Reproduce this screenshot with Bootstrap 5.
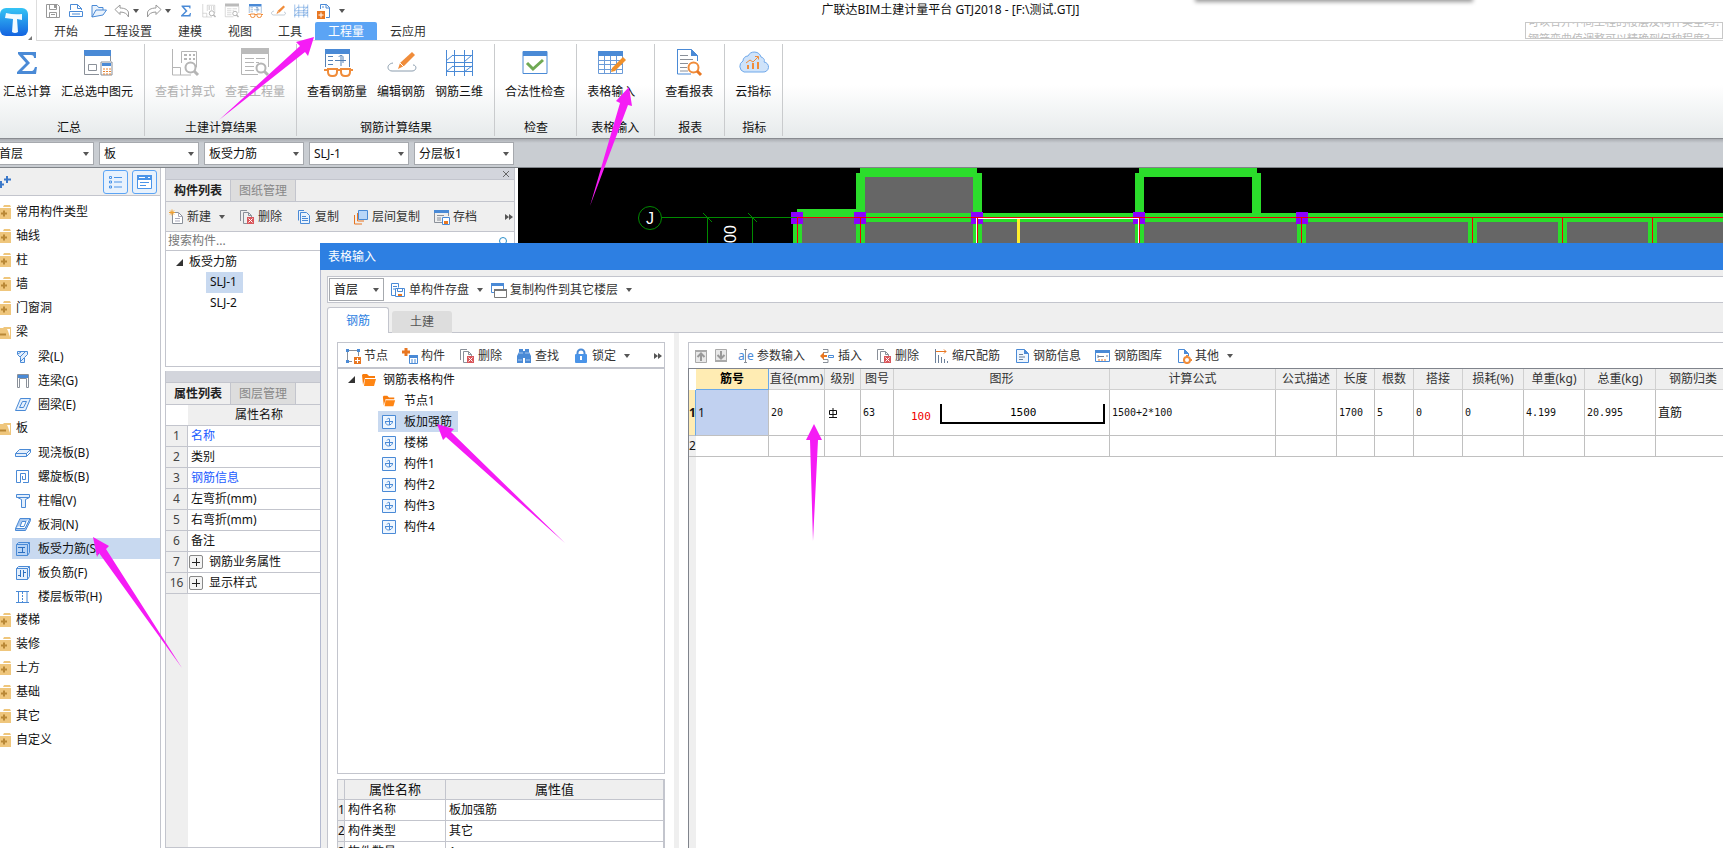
<!DOCTYPE html>
<html lang="zh-CN">
<head>
<meta charset="utf-8">
<meta name="viewport" content="width=device-width, initial-scale=1">
<title>广联达BIM土建计量平台 GTJ2018</title>
<link href="https://cdn.jsdelivr.net/npm/bootstrap@5.3.0/dist/css/bootstrap.min.css" rel="stylesheet">
<style>
:root{--edge:#c3c5cd;--face:#efefef;--blue:#4a8ad6;--sel:#c8d9f0}
body{font-family:"Noto Sans","Noto Sans CJK SC",sans-serif;font-size:12px;line-height:20px;color:#111;background:#fff}
button{background:none;border:0;padding:0;color:inherit;white-space:nowrap}
svg{display:block;flex:none}
a{color:inherit;text-decoration:none}
.ic{width:16px;height:16px}
.flip-x{transform:scaleX(-1)}
.flip-y{transform:scaleY(-1)}
.caret{width:0;height:0;border:3px solid transparent;border-top:4px solid #555;border-bottom:0;flex:none}
.tool{display:flex;align-items:center;gap:3px;color:#333}
.tool .caret{margin-left:5px}
/* title, quick access and tabs */
.topbar{height:41px;border-bottom:1px solid #d9d9d9}
.logo-box{width:37px;height:41px;background:#fff;border-right:1px solid #ddd;padding:8px 0 0}
.quick{height:22px;padding-left:8px;gap:7px}
.caption-text{padding-right:167px;height:20px}
.tabs-main button{height:18px;line-height:17px;padding:0 13px;color:#333}
.tabs-main button.on{background:#5ba4f5;color:#fff;border-radius:2px 2px 0 0}
.tips{width:198px;height:17px;border:1px solid #c8c8c8;font-size:11px;line-height:17px;color:#bbb;overflow:hidden;white-space:nowrap;padding-left:2px}
.tips p{margin:0}
.tips p:first-child{margin-top:-10px}
.peek{top:-6px;left:1196px;width:276px;height:6px;box-shadow:0 1px 4px 1px #999}
/* ribbon */
.ribbon{height:98px;background:linear-gradient(#fff 45%,#e6eaeb);border-bottom:1px solid #888b90}
.rgroup{margin:3px 0 2px;padding:0 11px 0 10px;border-right:1px solid #c9cbcd}
.rgroup.first{padding-left:3px}
.rgroup.wide{padding-right:19px}
.bigs{display:flex;gap:10px}
.big{display:flex;flex-direction:column;align-items:center;height:58px}
.big svg{width:32px;height:32px;margin:3px 0}
.big:disabled{color:#b0b0b0}
.rcap{height:20px;margin:16px -2px 0 0;text-align:center}
.wide .rcap{margin-right:-8px}
/* filter bar */
.filters{height:29px;background:linear-gradient(#a9acb1,#c9cdd2 4px);border-bottom:1px solid #808489;padding-top:3px;gap:5px;margin-left:-6px}
select{appearance:none;border:1px solid #a6a9ae;background:#fff url("data:image/svg+xml,%3Csvg xmlns='http://www.w3.org/2000/svg' width='6' height='4'%3E%3Cpath d='M0 0h6L3 4z' fill='%23555'/%3E%3C/svg%3E") no-repeat right 4px center;height:23px;padding:0 0 0 4px;color:#111;border-radius:0;line-height:20px}
.filters select{width:100px}
/* component type tree */
.types{width:161px;border-right:1px solid var(--edge)}
.types-head{height:28px;background:var(--face);border-bottom:1px solid var(--edge);gap:4px;padding-right:3px}
.sqbtn{width:25px;height:24px;border:1px solid #5ba4f5;border-radius:3px;background:#e8f2fd;display:flex;align-items:center;justify-content:center}
.types ul{padding:4px 0 0}
.types li a{display:flex;align-items:center;height:24px;gap:5px}
.types li a svg{margin-left:-5px}
.types li.sub{padding:2px 0 1px 12px}
.types li.sub a{height:21px;gap:7px}
.types li.sub a svg{margin-left:3px}
.types li.sub a.on,.pick{background:var(--sel)}
/* docked panels */
.dock{width:350px;margin:0 3px 0 4px;background:#fff}
.boxed{border:1px solid var(--edge);border-top:0}
.strip{height:12px;background:#d3d5dc;border-bottom:1px solid var(--edge)}
.duo{height:22px;background:var(--face);border-bottom:1px solid var(--edge)}
.duo button{width:65px;border-right:1px solid var(--edge);color:#888;background:#ddd}
.duo button.on{background:var(--face);color:#222;font-weight:600}
.dtool{height:30px;background:var(--face);border-bottom:1px solid var(--edge);gap:14px;padding:0 1px 0 2px}
.find{height:19px;border:0;border-bottom:1px solid var(--edge);width:100%;padding:0 2px;outline:0}
.find::placeholder{color:#777}
.upper{height:199px;margin-bottom:4px}
.root-row{padding:1px 0 0 10px;gap:6px}
.slj{height:21px;margin-left:40px;width:37px;padding-left:4px;display:block}
table{table-layout:fixed;border-collapse:separate;border-spacing:0}
th{font-weight:400;text-align:center}
td,th{padding:0;white-space:nowrap;overflow:hidden}
.props{width:164px}
.props col:first-child{width:22px}
.props th,.props td{height:21px;border-bottom:1px solid var(--edge)}
.props thead th{height:21px;background:var(--face)}
.props tbody th{background:var(--face);border-right:1px solid var(--edge);color:#444}
.props td{padding-left:3px}
.props td.key{color:#1a5cff}
.lower{background:linear-gradient(to right,var(--face) 22px,#fff 22px)}
.fold-cell{display:flex;align-items:center;gap:6px;margin-left:-2px}
.plus{width:14px;height:14px;border:1px solid #888;border-radius:2px;background:linear-gradient(#222,#222) center/8px 1px no-repeat,linear-gradient(#222,#222) center/1px 8px no-repeat,#f4f4f4}
/* table input window */
.win{left:320px;top:75px;right:0;bottom:0;background:var(--face);border-left:1px solid #b4bad0}
.win-title{height:27px;background:#2d7fe2;color:#fff;padding:4px 8px;margin-left:-1px}
.win-tool{height:27px;margin:6px 0 4px 6px;border:1px solid var(--edge);border-right:0;background:#fff;padding-left:1px}
.win-tool select{width:55px;margin-right:6px}
.win-tabs{height:26px;padding-left:6px;position:relative;z-index:1;margin-bottom:-1px}
.win-tabs button{width:60px;height:22px;background:#ddd;color:#555;border-radius:3px 3px 0 0;margin-left:3px}
.win-tabs button.on{width:62px;height:26px;margin:0;background:#fff;border:1px solid var(--edge);border-bottom:0;color:#2d7fe2}
.pane{margin-left:6px;background:#fff;border:1px solid var(--edge);border-width:1px 0 0 1px;padding:9px 0 0 9px}
.side{width:328px}
.bar{height:27px;border:1px solid var(--edge);gap:14px;padding:0 2px 0 7px}
.movers{gap:4px;margin-right:-5px}
.tree{border:1px solid var(--edge);border-top-width:2px;margin-top:-2px}
.tree a{display:flex;align-items:center;height:21px;gap:6px}
.tree .root{padding-left:10px}
.tree .leaf{margin-left:40px;padding:0 6px 0 4px;width:max-content}
.tree .leaf svg{width:14px;height:14px;margin-right:2px}
.tri{width:0;height:0;border-left:7px solid transparent;border-bottom:7px solid #333;display:inline-block}
.low{height:69px;margin-top:5px;overflow:hidden;border:1px solid var(--edge);border-bottom:0}
.low col:nth-child(1){width:7px}
.low col:nth-child(2){width:101px}
.low th,.low td{border:1px solid var(--edge);border-width:0 1px 1px 0;height:21px}
.low thead th{height:20px;background:var(--face);font-size:13px;line-height:19px}
.low tbody th{background:var(--face)}
.low td{padding-left:3px}
.split{width:5px;background:var(--face);margin:-9px 9px 0 9px}
.sheet{border-left:1px solid #80848c;border-top:1px solid #80848c;background:linear-gradient(to right,var(--face) 7px,#fff 7px);overflow:hidden;margin-top:-1px}
.bars{width:1042px}
.bars col:nth-child(1){width:7px}
.bars col:nth-child(2){width:73px}
.bars col:nth-child(3){width:56px}
.bars col:nth-child(4){width:36px}
.bars col:nth-child(5){width:33px}
.bars col:nth-child(6){width:216px}
.bars col:nth-child(7){width:166px}
.bars col:nth-child(8){width:61px}
.bars col:nth-child(9){width:38px}
.bars col:nth-child(10){width:39px}
.bars col:nth-child(11){width:49px}
.bars col:nth-child(12),.bars col:nth-child(13){width:61px}
.bars col:nth-child(14){width:71px}
.bars th,.bars td{border:1px solid #c0c0c0;border-width:0 1px 1px 0}
.bars thead th{height:21px;background:var(--face);color:#333;border-color:#d0d0d0}
.bars thead th:first-child{background:#fff;border:0}
.bars thead th.on{background:#ffecb3;font-weight:700;color:#000;border-color:#6aa9e8}
.bars tbody th{background:var(--face);border-right:0}
.bars tr.r1{height:46px}
.bars tr.r2{height:21px}
.bars tr.r1 th{background:#ffecb3;border-right:1px solid #6aa9e8;font-weight:700}
.bars td{padding-left:2px;font-family:"DejaVu Sans Mono","Noto Sans CJK SC",monospace;font-size:10px;line-height:16px}
.bars td.cur{background:#c1d1f0;font-family:inherit;font-size:12px}
.bars td.han{font-size:12px}
.shape{font:11px "DejaVu Sans Mono",monospace}
.cad-text{font-family:"Liberation Sans",sans-serif}
.marks{inset:0;pointer-events:none;z-index:5}
</style>
</head>
<body class="vh-100 overflow-hidden d-flex flex-column position-relative">

<svg width="0" height="0" class="position-absolute" aria-hidden="true">
  <symbol id="save" viewBox="0 0 16 16"><path d="M1.500 1.500h11l2 2v11h-13z M4.500 1.500v5h7v-5 M4.500 14.500v-5h7v5" fill="none" stroke="#999"/><path d="M9 2h2v3H9zM6 11h4v1H6z" fill="#999"/></symbol>
  <symbol id="new" viewBox="0 0 16 16"><path d="M2.500 7V1.500h7l4 4V7M1.500 8.500h13v5h-13z M9.500 1.500v4h4M4 11h8" fill="none" stroke="#4a8ad6"/></symbol>
  <symbol id="open" viewBox="0 0 16 16"><path d="M1 14V2.500h5l1.500 2H12V7M1 14l4-7h10.500L12 12z" fill="#eaf3fd" stroke="#4a8ad6"/></symbol>
  <symbol id="undo" viewBox="0 0 16 16"><path d="M1 6.500L6 2v3c5 0 8.500 2 8.500 5v4c-1-3-4-5-8.500-5v2.500z" fill="#fff" stroke="#999"/></symbol>
  <symbol id="sigma" viewBox="0 0 32 32"><path d="M7 5h18v6h-2c0-2-1-3-3-3h-8l7 8-8 8h9c3 0 3-2 4-4h2l-1 7H6v-2l9-9-8-9z" fill="#4a8ad6"/></symbol>
  <symbol id="pick" viewBox="0 0 32 32"><path d="M3 3h27v6H3z" fill="#4a8ad6"/><path d="M3.500 8v19.500H18M29.500 9v5M7.500 17.500h8v6h-8z" fill="none" stroke="#8a9099"/><path d="M20 15h11v13H20z" fill="#fff" stroke="#8a9099"/><path d="M21 16h9v3h-9z" fill="#4a8ad6"/><path d="M22 22h2m1 0h2m1 0h2M22 24.500h2m1 0h2m1 0h2M22 27h2m1 0h2m1 0h2" stroke="#e88330"/></symbol>
  <symbol id="calc" viewBox="0 0 32 32"><g fill="none" stroke="#b5b5b5"><path d="M3.500 2v26H22M3.500 20.500h8V28M12.500 16V4.500h15V20H26"/><circle cx="21.500" cy="20.500" r="5" stroke-width="2"/><path d="M25 24l4 4" stroke-width="3"/><path d="M15 8h3m2 0h2m2 0h2M15 12h3m2 0h2m2 0h2" stroke-width="2"/></g></symbol>
  <symbol id="quant" viewBox="0 0 32 32"><path d="M2 1h28v6H2z" fill="#bbb"/><g fill="none" stroke="#b5b5b5"><path d="M2.500 7v20.500H19M29.500 7v13M6 11.500h9m2 0h9M6 15.500h9m2 0h3M6 19.500h9M6 23.500h9"/><circle cx="22" cy="21" r="4.500" stroke-width="2"/><path d="M25 24l4 4" stroke-width="3"/></g></symbol>
  <symbol id="glass" viewBox="0 0 32 32"><path d="M4 2h25v5H4z" fill="#4a8ad6"/><path d="M4.500 7v13M28.500 7v13M7 9.500h5M7 13.500h5M7 17.500h5M14 13.500h11M20 8v11M18 10c0-2 4-2 4 0v6" fill="none" stroke="#5581b5"/><g fill="#fff" stroke="#f08c3a" stroke-width="2"><path d="M7 22h9v3q0 4-4 4h-1q-4 0-4-4zM20 22h9v3q0 4-4 4h-1q-4 0-4-4z"/><path d="M15 23h5M3 23h4M29 23h3" fill="none"/></g></symbol>
  <symbol id="edit" viewBox="0 0 32 32"><path d="M27 5l3 3-11 11-6 3 2-6z" fill="#f08c3a"/><path d="M15 16l4 4" stroke="#fff"/><path d="M8 16c-7 1-6 8-1 8h20c5 0 5-6 1-6" fill="none" stroke="#8a9cad"/></symbol>
  <symbol id="grid3" viewBox="0 0 32 32"><path d="M3.500 3v26M11.500 3v26M21.500 3v26M29.500 3v26M9 8.500h21M3 15.500h27M9 19.500h21M3 24.500h27M3 14l7-6M21 15l8-7M3 25l7-6M21 25l8-6" fill="none" stroke="#4a8ad6"/></symbol>
  <symbol id="docplus" viewBox="0 0 16 16"><path d="M4.500 6V1.500h6l3 3v10H10" fill="none" stroke="#4a8ad6"/><path d="M10 1v4h4M6 4h2" stroke="#4a8ad6" fill="none"/><path d="M1 8h8v8H1z" fill="#e87722"/><path d="M5 9.500v5M2.500 12h5" stroke="#fff"/></symbol>
  <symbol id="check" viewBox="0 0 32 32"><path d="M4 4.500h24v22H4z" fill="#fff" stroke="#4a8ad6"/><path d="M4 4h24v5H4z" fill="#4a8ad6"/><path d="M8 16l6 6 10-9" fill="none" stroke="#6fa954" stroke-width="3"/></symbol>
  <symbol id="tabin" viewBox="0 0 32 32"><path d="M3 4h25v5H3z" fill="#4a8ad6"/><path d="M3.500 9v17.500h24V9M3 13.500h24M3 17.500h24M3 22.500h24M9.500 9v17M15.500 9v17M21.500 9v17" fill="none" stroke="#6b9bd8"/><path d="M28 10l3 3-11 11-4 1 1-4z" fill="#f0902a"/></symbol>
  <symbol id="report" viewBox="0 0 32 32"><path d="M4.500 2.500h14l6 6V14M4.500 2v25H18" fill="none" stroke="#4a8ad6"/><path d="M18 2v7h7z" fill="#4a8ad6"/><path d="M7 8.500h8M7 12.500h13M7 16.500h8M7 20.500h7M7 24h8" stroke="#8a9099"/><circle cx="20.500" cy="20.500" r="5" fill="none" stroke="#f08c3a" stroke-width="2"/><path d="M24 24l4 4" stroke="#e87722" stroke-width="3"/></symbol>
  <symbol id="cloud" viewBox="0 0 32 32"><path d="M7 25a6 6 0 0 1-1-11 5 5 0 0 1 5-5 7 7 0 0 1 13 1c3 1 4 3 3 5a5 5 0 0 1-1 10z" fill="#cfe3fa" stroke="#6fa8ea"/><path d="M11 22v-4M16 22v-6M21 22v-7" stroke="#f08c3a" stroke-width="2"/><path d="M9 16l4-3 3 2 5-5M18 9.500h3.500v3" fill="none" stroke="#f08c3a"/></symbol>
  <symbol id="fold" viewBox="0 0 16 16"><path d="M9 1h6l1 2H8zM1 4h15v11H1z" fill="#efc67c"/><path d="M9 6.500v6M6 9.500h6" stroke="#b98836" stroke-width="2"/></symbol>
  <symbol id="foldo" viewBox="0 0 16 16"><path d="M1 4h7l1-1h7v12H1z" fill="#efc67c"/><path d="M12 5h3v8l-2-6z" fill="#fff"/><path d="M5 10.500h6" stroke="#b98836" stroke-width="2"/></symbol>
  <symbol id="beam" viewBox="0 0 16 16"><path d="M2.500 2.500h10v3l-3 3v5h-4v-5l-3-3z" fill="#e4effc" stroke="#4a8ad6"/><path d="M3 5l3-2M5 8l5-5M6 12l3-3" stroke="#4a8ad6"/></symbol>
  <symbol id="lintel" viewBox="0 0 16 16"><path d="M2.500 1.500h11v13h-2v-9h-7v9h-2z" fill="#fff" stroke="#8a9099"/><path d="M3 2h10v3H3z" fill="#4a8ad6"/></symbol>
  <symbol id="ring" viewBox="0 0 16 16"><path d="M5.500 1.500h10l-5 12H.5zM7.500 4.500h4l-3 6h-4z" fill="#e4effc" stroke="#4a8ad6"/></symbol>
  <symbol id="slab" viewBox="0 0 16 16"><path d="M.5 8.500l4-4h11l-4 4zM.5 8.500v3h11v-3M11.500 11.500l4-4v-3" fill="#e4effc" stroke="#4a8ad6"/></symbol>
  <symbol id="spiral" viewBox="0 0 16 16"><path d="M8 13.500h5.500v-12h-12v12H5.500v-9h5v6h-3V7" fill="none" stroke="#4a8ad6"/></symbol>
  <symbol id="cap" viewBox="0 0 16 16"><path d="M1.500 1.500h13v3l-4 2v8h-4v-8l-4-2h-1z" fill="#e4effc" stroke="#4a8ad6"/><path d="M2 4.500h12" stroke="#4a8ad6"/></symbol>
  <symbol id="hole" viewBox="0 0 16 16"><path d="M5 1.500h10l-5 10H.5zM.5 11.500v2h10l5-10v-2" fill="#a9c8ef" stroke="#4a8ad6"/><path d="M7 4.500h4l-2 5H5z" fill="#fff" stroke="#4a8ad6"/></symbol>
  <symbol id="rebar" viewBox="0 0 16 16"><path d="M1.500 3.500l2-2h11v10l-2 3h-11zM1.500 3.500h11v11M12.500 3.500l2-2" fill="#b7d3f5" stroke="#4a8ad6"/><path d="M3 6.500h7M3 11.500h7M7.500 6v6" stroke="#2c6fc0"/></symbol>
  <symbol id="rebarf" viewBox="0 0 16 16"><path d="M1.500 3.500l2-2h11v10l-2 3h-11zM1.500 3.500h11v11M12.500 3.500l2-2" fill="#e4effc" stroke="#4a8ad6"/><path d="M5.500 5v7M8.500 5v7M3 10.500h3M8 7.500h3" stroke="#2c6fc0"/></symbol>
  <symbol id="strip" viewBox="0 0 16 16"><path d="M1 2.500h13M1 13.500h13" stroke="#4a8ad6"/><path d="M3.500 3v10M12 3v10" stroke="#4a8ad6"/><path d="M7.500 3v10" stroke="#4a8ad6" stroke-dasharray="2 1"/></symbol>
  <symbol id="nu" viewBox="0 0 16 16"><path d="M4.500 3.500h6l4 4v7h-10z" fill="#fff" stroke="#8a9099"/><path d="M10.500 3.500v4h4M7 9.500h5M7 12h5" fill="none" stroke="#aab"/><path d="M4 .500v6M1 3.500h6M2 1.500l4 4M6 1.500l-4 4" stroke="#f0a030"/></symbol>
  <symbol id="del" viewBox="0 0 16 16"><path d="M1.500 12V1.500H8M4.500 14.500v-11h5l3 3V9M4.500 14.500H8M9.500 3.500v3h3" fill="none" stroke="#8a9099"/><path d="M8 8h7v7H8z" fill="#d9575c"/><path d="M9.500 9.500l4 4m0-4l-4 4" stroke="#fff"/></symbol>
  <symbol id="copy" viewBox="0 0 16 16"><path d="M2.500 11.500V1.500H8M4.500 3.500h6l3 3v8h-9z" fill="#eaf3fd" stroke="#4a8ad6"/><path d="M6 7.500h4M6 9.500h6M6 11.500h6" stroke="#4a8ad6"/></symbol>
  <symbol id="floors" viewBox="0 0 16 16"><path d="M1.500 6v9H9M4.500 4v8H11" fill="none" stroke="#e87722"/><path d="M5.500 1.500h9v9h-9z" fill="#b9d6f8" stroke="#4a8ad6"/></symbol>
  <symbol id="archive" viewBox="0 0 16 16"><path d="M0 1h15v3H0z" fill="#4a8ad6"/><path d="M.5 4v9.500H8M14.500 4v3M3 6.500h7M3 9h4M3 11h4" fill="none" stroke="#8a9099"/><path d="M8.500 8.500h7v7h-7z" fill="#fff" stroke="#4a8ad6"/><path d="M10 12h4v3h-4z" fill="#e87722"/></symbol>
  <symbol id="disk" viewBox="0 0 16 16"><path d="M6 13.500H1.500V1.500h7v4M3 4.500h4M3 7h2" fill="none" stroke="#4a8ad6"/><path d="M5.500 6.500h9v8h-9z" fill="#fff" stroke="#4a8ad6"/><path d="M7.500 6.500v3h5v-3" fill="none" stroke="#4a8ad6"/><path d="M8 12h4v2H8z" fill="#e87722"/></symbol>
  <symbol id="wins" viewBox="0 0 16 16"><path d="M.5 1.500h12v9H.5z" fill="#fff" stroke="#4a8ad6"/><path d="M0 1h13v3H0z" fill="#4a8ad6"/><path d="M3.500 7.500h12v8h-12z" fill="#fff" stroke="#777"/><path d="M3 7h13v2H3z" fill="#777"/></symbol>
  <symbol id="node" viewBox="0 0 16 16"><path d="M2.500 2.500h11V8M2.500 2.500v11H7" fill="none" stroke="#8a9099"/><path d="M1 1h3v3H1zM12 1h3v3h-3zM1 12h3v3H1z" fill="#4a8ad6"/><path d="M9 9h7v7H9z" fill="#e87722"/><path d="M12.500 10v5M10 12.500h5" stroke="#fff"/></symbol>
  <symbol id="comp" viewBox="0 0 16 16"><path d="M4 0v8M0 4h8" stroke="#e87722" stroke-width="3"/><path d="M7.500 7.500h8v8h-8z" fill="#fff" stroke="#4a8ad6"/><path d="M7 7h9v3H7z" fill="#4a8ad6"/><path d="M9 12h2m1 0h2M9 14h2m1 0h2" stroke="#4a8ad6"/></symbol>
  <symbol id="bino" viewBox="0 0 16 16"><path d="M3 1h4v2h2V1h4v3l2 4v7H9v-5H7v5H1V8l2-4z" fill="#4a8ad6"/><path d="M2 12h4M10 12h4M3 5h4M9 5h4" stroke="#a9c8ef"/></symbol>
  <symbol id="lock" viewBox="0 0 16 16"><path d="M4.500 7V5a3.500 3.500 0 0 1 7 0v2" fill="none" stroke="#4a8ad6" stroke-width="2"/><rect x="2" y="6" width="12" height="9" rx="1" fill="#4a94e8"/><path d="M8 8v4" stroke="#fff" stroke-width="2"/></symbol>
  <symbol id="more" viewBox="0 0 8 8"><path d="M0 1l4 3-4 3zM4 1l4 3-4 3z" fill="#555"/></symbol>
  <symbol id="ofold" viewBox="0 0 16 16"><path d="M1 3l1-1h4l2 2h6v2H4l-2 7z" fill="#f97c0c"/><path d="M4 7h11l-2 7H3z" fill="#ff8614"/></symbol>
  <symbol id="leaf" viewBox="0 0 14 14"><path d="M.5.5h13v13H.5z" fill="#eef6ff" stroke="#4a8ad6"/><path d="M7.500 3.500V10M3 6.500h8M5 4.500c1-2 3-1 2.500 0M3.500 7c0 4 6 4 7 0" fill="none" stroke="#4a8ad6"/></symbol>
  <symbol id="up" viewBox="0 0 16 16"><path d="M2.500 2.500h11v12h-11z" fill="#e8e8e8" stroke="#aaa"/><path d="M8 13V6M4.500 9L8 5.500 11.500 9" fill="none" stroke="#999" stroke-width="2"/><path d="M2 2h12v2H2z" fill="#aaa"/></symbol>
  <symbol id="ins" viewBox="0 0 16 16"><path d="M4 1.500h5v3H4M4 14.500h5v-3H4" fill="none" stroke="#8a9099"/><path d="M1 8l4-4v3h3v2H5v3z" fill="#e87722"/><path d="M9.500 7.500h5v2h-5z" fill="#fff" stroke="#4a8ad6"/></symbol>
  <symbol id="ruler" viewBox="0 0 16 16"><path d="M2 3.500h11M11 1.500l2 2-2 2" fill="none" stroke="#e87722"/><path d="M2.500 1v14M5.500 7v8M8.500 9v6M11.500 11v4M14.500 13v2" stroke="#6b7f99"/></symbol>
  <symbol id="info" viewBox="0 0 16 16"><path d="M2.500 1.500h8l4 4v9h-12z" fill="#eef6ff" stroke="#4a8ad6"/><path d="M10 1v5h5z" fill="#4a8ad6"/><path d="M5 6.500h4M5 9h6M5 11.500h4" stroke="#6b7f99"/></symbol>
  <symbol id="lib" viewBox="0 0 16 16"><path d="M.5 2.500h14v11H.5z" fill="#fff" stroke="#4a8ad6"/><path d="M0 2h15v3H0z" fill="#4a8ad6"/><path d="M3 7v3M3 8.500h6M11 8h2" stroke="#6b7f99"/><path d="M3 12h2m1 0h2m1 0h2" stroke="#e87722"/></symbol>
  <symbol id="oth" viewBox="0 0 16 16"><path d="M8 14.500H2.500v-13h6l4 4V8" fill="#fff" stroke="#4a8ad6"/><path d="M8 1v5h5z" fill="#4a8ad6"/><circle cx="11" cy="12" r="3" fill="none" stroke="#f08c3a" stroke-width="2"/><path d="M11 7v2M11 15v1M7 12h1M14 12h2" stroke="#f08c3a" stroke-width="2"/></symbol>
</svg>

<header class="topbar d-flex flex-shrink-0">
  <div class="logo-box flex-shrink-0">
    <svg width="33" height="32" viewBox="0 0 33 32" role="img" aria-label="GTJ"><defs><linearGradient id="lg" x2="0" y2="1"><stop stop-color="#35c4f5"/><stop offset="1" stop-color="#1463e0"/></linearGradient></defs><rect width="28" height="28" rx="6" fill="url(#lg)"/><path d="M6 5q8 2 16 1v6l-5-1 1 13q-3 2-6 0l1-13-8-1z" fill="#f2faff"/><path d="M32 28v4h-4z" fill="#777"/></svg>
  </div>
  <div class="flex-grow-1">
    <div class="d-flex">
      <div class="quick d-flex align-items-center">
        <button aria-label="保存"><svg class="ic"><use href="#save"/></svg></button>
        <button aria-label="新建"><svg class="ic"><use href="#new"/></svg></button>
        <button aria-label="打开"><svg class="ic"><use href="#open"/></svg></button>
        <button class="tool" aria-label="撤销"><svg class="ic"><use href="#undo"/></svg><i class="caret m-0"></i></button>
        <button class="tool" aria-label="恢复"><svg class="ic flip-x"><use href="#undo"/></svg><i class="caret m-0"></i></button>
        <button aria-label="汇总"><svg class="ic"><use href="#sigma"/></svg></button>
        <button aria-label="计算式"><svg class="ic"><use href="#calc"/></svg></button>
        <button aria-label="工程量"><svg class="ic"><use href="#quant"/></svg></button>
        <button aria-label="钢筋量"><svg class="ic"><use href="#glass"/></svg></button>
        <button aria-label="编辑钢筋"><svg class="ic"><use href="#edit"/></svg></button>
        <button aria-label="钢筋三维"><svg class="ic"><use href="#grid3"/></svg></button>
        <button aria-label="添加"><svg class="ic"><use href="#docplus"/></svg></button>
        <button aria-label="自定义快速访问"><i class="caret d-block"></i></button>
      </div>
      <div class="caption-text flex-grow-1 text-center">广联达BIM土建计量平台 GTJ2018 - [F:\测试.GTJ]</div>
    </div>
    <div class="d-flex justify-content-between">
      <nav class="tabs-main d-flex ps-1">
        <button>开始</button><button>工程设置</button><button>建模</button><button>视图</button><button>工具</button><button class="on">工程量</button><button>云应用</button>
      </nav>
      <div class="tips"><p>可以合并不同工程的楼层及构件类型吗？</p><p>钢筋弯曲值调整可以精确到何种程度？</p></div>
    </div>
  </div>
</header>
<div class="peek position-absolute"></div>

<section class="ribbon d-flex flex-shrink-0">
  <div class="rgroup first"><div class="bigs">
    <button class="big"><svg><use href="#sigma"/></svg>汇总计算</button>
    <button class="big"><svg><use href="#pick"/></svg>汇总选中图元</button></div><div class="rcap">汇总</div></div>
  <div class="rgroup"><div class="bigs">
    <button class="big" disabled><svg><use href="#calc"/></svg>查看计算式</button>
    <button class="big" disabled><svg><use href="#quant"/></svg>查看工程量</button></div><div class="rcap">土建计算结果</div></div>
  <div class="rgroup"><div class="bigs">
    <button class="big"><svg><use href="#glass"/></svg>查看钢筋量</button>
    <button class="big"><svg><use href="#edit"/></svg>编辑钢筋</button>
    <button class="big"><svg><use href="#grid3"/></svg>钢筋三维</button></div><div class="rcap">钢筋计算结果</div></div>
  <div class="rgroup"><button class="big"><svg><use href="#check"/></svg>合法性检查</button><div class="rcap">检查</div></div>
  <div class="rgroup wide"><button class="big"><svg><use href="#tabin"/></svg>表格输入</button><div class="rcap">表格输入</div></div>
  <div class="rgroup"><button class="big"><svg><use href="#report"/></svg>查看报表</button><div class="rcap">报表</div></div>
  <div class="rgroup"><button class="big"><svg><use href="#cloud"/></svg>云指标</button><div class="rcap">指标</div></div>
</section>

<div class="filters d-flex flex-shrink-0">
  <select aria-label="楼层"><option>首层</option></select>
  <select aria-label="构件类别"><option>板</option></select>
  <select aria-label="构件类型"><option>板受力筋</option></select>
  <select aria-label="构件"><option>SLJ-1</option></select>
  <select aria-label="分层"><option>分层板1</option></select>
</div>

<main class="d-flex flex-grow-1 position-relative overflow-hidden">
  <aside class="types flex-shrink-0">
    <div class="types-head d-flex align-items-center">
      <svg class="me-auto" width="11" height="14" viewBox="0 0 11 14"><path d="M7 1v7M4 4.500h7M1 6v7M0 9.500h4" stroke="#3b78c9" stroke-width="2"/></svg>
      <button class="sqbtn" aria-label="列表"><svg width="13" height="14" viewBox="0 0 13 14"><path d="M.5 1.500h2v2h-2zM.5 6h2v2h-2zM.5 11h2v2h-2zM5 2.500h8M5 7h8M5 12h8" fill="none" stroke="#4a94e8"/></svg></button>
      <button class="sqbtn" aria-label="面板"><svg width="15" height="14" viewBox="0 0 15 14"><path d="M.5.5h14v13H.5z" fill="#fff" stroke="#4a94e8"/><path d="M0 0h15v5H0z" fill="#4a94e8"/><path d="M2 2.500h6m3 0h2" stroke="#fff"/><path d="M3 7.500h9M3 10.500h6" stroke="#4a94e8"/></svg></button>
    </div>
    <ul class="list-unstyled m-0">
      <li><a href="#"><svg class="ic"><use href="#fold"/></svg>常用构件类型</a></li>
      <li><a href="#"><svg class="ic"><use href="#fold"/></svg>轴线</a></li>
      <li><a href="#"><svg class="ic"><use href="#fold"/></svg>柱</a></li>
      <li><a href="#"><svg class="ic"><use href="#fold"/></svg>墙</a></li>
      <li><a href="#"><svg class="ic"><use href="#fold"/></svg>门窗洞</a></li>
      <li><a href="#"><svg class="ic"><use href="#foldo"/></svg>梁</a></li>
      <li class="sub"><a href="#"><svg class="ic"><use href="#beam"/></svg>梁(L)</a></li>
      <li class="sub"><a href="#"><svg class="ic"><use href="#lintel"/></svg>连梁(G)</a></li>
      <li class="sub"><a href="#"><svg class="ic"><use href="#ring"/></svg>圈梁(E)</a></li>
      <li><a href="#"><svg class="ic"><use href="#foldo"/></svg>板</a></li>
      <li class="sub"><a href="#"><svg class="ic"><use href="#slab"/></svg>现浇板(B)</a></li>
      <li class="sub"><a href="#"><svg class="ic"><use href="#spiral"/></svg>螺旋板(B)</a></li>
      <li class="sub"><a href="#"><svg class="ic"><use href="#cap"/></svg>柱帽(V)</a></li>
      <li class="sub"><a href="#"><svg class="ic"><use href="#hole"/></svg>板洞(N)</a></li>
      <li class="sub"><a href="#" class="on"><svg class="ic"><use href="#rebar"/></svg>板受力筋(S)</a></li>
      <li class="sub"><a href="#"><svg class="ic"><use href="#rebarf"/></svg>板负筋(F)</a></li>
      <li class="sub"><a href="#"><svg class="ic"><use href="#strip"/></svg>楼层板带(H)</a></li>
      <li><a href="#"><svg class="ic"><use href="#fold"/></svg>楼梯</a></li>
      <li><a href="#"><svg class="ic"><use href="#fold"/></svg>装修</a></li>
      <li><a href="#"><svg class="ic"><use href="#fold"/></svg>土方</a></li>
      <li><a href="#"><svg class="ic"><use href="#fold"/></svg>基础</a></li>
      <li><a href="#"><svg class="ic"><use href="#fold"/></svg>其它</a></li>
      <li><a href="#"><svg class="ic"><use href="#fold"/></svg>自定义</a></li>
    </ul>
  </aside>

  <div class="dock d-flex flex-column flex-shrink-0">
    <section class="upper boxed">
      <div class="strip d-flex justify-content-end align-items-center pe-1"><button aria-label="关闭"><svg width="8" height="8" viewBox="0 0 8 8"><path d="M1 1l6 6M7 1L1 7" stroke="#666"/></svg></button></div>
      <div class="duo d-flex"><button class="on">构件列表</button><button>图纸管理</button></div>
      <div class="dtool d-flex align-items-center">
        <button class="tool"><svg class="ic"><use href="#nu"/></svg>新建<i class="caret"></i></button>
        <button class="tool"><svg class="ic"><use href="#del"/></svg>删除</button>
        <button class="tool"><svg class="ic"><use href="#copy"/></svg>复制</button>
        <button class="tool"><svg class="ic"><use href="#floors"/></svg>层间复制</button>
        <button class="tool"><svg class="ic"><use href="#archive"/></svg>存档</button>
        <button class="ms-auto" aria-label="更多"><svg width="8" height="8"><use href="#more"/></svg></button>
      </div>
      <div class="position-relative">
        <input class="find d-block" type="text" placeholder="搜索构件..." aria-label="搜索构件">
        <svg class="position-absolute top-0 end-0 me-1 mt-1" width="12" height="14" viewBox="0 0 12 14"><circle cx="5" cy="5" r="3.500" fill="none" stroke="#2c8fc9"/><path d="M8 8l3 4" stroke="#2c8fc9" stroke-width="2"/></svg>
      </div>
      <div class="root-row d-flex align-items-center"><i class="tri"></i><span>板受力筋</span></div>
      <a href="#" class="slj pick">SLJ-1</a>
      <a href="#" class="slj">SLJ-2</a>
    </section>
    <section class="lower boxed flex-grow-1 overflow-hidden">
      <div class="strip"></div>
      <div class="duo d-flex"><button class="on">属性列表</button><button>图层管理</button></div>
      <table class="props">
        <colgroup><col><col></colgroup>
        <thead><tr><th class="bg-white"></th><th>属性名称</th></tr></thead>
        <tbody>
          <tr><th>1</th><td class="key">名称</td></tr>
          <tr><th>2</th><td>类别</td></tr>
          <tr><th>3</th><td class="key">钢筋信息</td></tr>
          <tr><th>4</th><td>左弯折(mm)</td></tr>
          <tr><th>5</th><td>右弯折(mm)</td></tr>
          <tr><th>6</th><td>备注</td></tr>
          <tr><th>7</th><td><div class="fold-cell"><button class="plus" aria-label="展开"></button>钢筋业务属性</div></td></tr>
          <tr><th>16</th><td><div class="fold-cell"><button class="plus" aria-label="展开"></button>显示样式</div></td></tr>
        </tbody>
      </table>
    </section>
  </div>

  <div class="flex-grow-1 bg-black overflow-hidden">
    <svg width="1205" height="75" viewBox="518 168 1205 75" shape-rendering="crispEdges">
      <path d="M865 177h108v36H865zM797 217h926v26H797z" fill="#666"/>
      <g fill="#2bdd2b"><path d="M797 209h59v8h-59zM860 168h117v9H860zM856 173h9v70h-9zM973 173h9v70h-9zM865 213h858v9H865zM793 224h9v19h-9zM1139 168h118v9h-118zM1135 173h9v70h-9zM1252 173h9v40h-9zM1297 222h9v21h-9zM1468 222h9v21h-9zM1558 222h9v21h-9zM1648 222h9v21h-9z"/></g>
      <g fill="#8c00ff"><path d="M791 212h12v12h-12zM854 212h12v12h-12zM971 212h12v12h-12zM1133 212h12v12h-12zM1296 212h12v12h-12z"/></g>
      <path d="M1017 218h3v25h-3z" fill="#ffef2b"/>
      <path d="M976.500 218v25M978 218.500h160.500v24.500" fill="none" stroke="#fff"/>
      <path d="M797 217.500h926M797.500 218v25M860.500 218v25M977.500 218v25M1139.500 218v25M1301.500 218v25M1472.500 218v25M1562.500 218v25M1652.500 218v25" stroke="#f00000"/>
      <g fill="none" stroke="#008a00"><circle cx="650" cy="218" r="11.500" shape-rendering="auto"/><path d="M662 217.500h135M707.500 217v26M752.500 217v26M703 213l9 9M748 213l9 9"/></g>
      <g class="cad-text" fill="#fff"><text x="646" y="224" font-size="16">J</text><text transform="translate(736 243) rotate(-90)" font-size="16">00</text></g>
    </svg>
  </div>

  <section class="win position-absolute d-flex flex-column" role="dialog" aria-label="表格输入">
    <div class="win-title">表格输入</div>
    <div class="win-tool d-flex align-items-center flex-shrink-0">
      <select aria-label="楼层"><option>首层</option></select>
      <button class="tool"><svg class="ic"><use href="#disk"/></svg>单构件存盘<i class="caret"></i></button>
      <button class="tool ms-2"><svg class="ic"><use href="#wins"/></svg>复制构件到其它楼层<i class="caret"></i></button>
    </div>
    <div class="win-tabs d-flex align-items-end flex-shrink-0"><button class="on">钢筋</button><button>土建</button></div>
    <div class="pane d-flex flex-grow-1 overflow-hidden">
      <div class="side d-flex flex-column flex-shrink-0">
        <div class="bar d-flex align-items-center flex-shrink-0">
          <button class="tool"><svg class="ic"><use href="#node"/></svg>节点</button>
          <button class="tool"><svg class="ic"><use href="#comp"/></svg>构件</button>
          <button class="tool"><svg class="ic"><use href="#del"/></svg>删除</button>
          <button class="tool"><svg class="ic"><use href="#bino"/></svg>查找</button>
          <button class="tool"><svg class="ic"><use href="#lock"/></svg>锁定<i class="caret"></i></button>
          <button class="ms-auto" aria-label="更多"><svg width="8" height="8"><use href="#more"/></svg></button>
        </div>
        <div class="tree flex-grow-1 overflow-hidden">
          <a href="#" class="root"><i class="tri"></i><svg class="ic"><use href="#ofold"/></svg>钢筋表格构件</a>
          <a href="#" class="leaf"><svg><use href="#ofold"/></svg>节点1</a>
          <a href="#" class="leaf pick"><svg><use href="#leaf"/></svg>板加强筋</a>
          <a href="#" class="leaf"><svg><use href="#leaf"/></svg>楼梯</a>
          <a href="#" class="leaf"><svg><use href="#leaf"/></svg>构件1</a>
          <a href="#" class="leaf"><svg><use href="#leaf"/></svg>构件2</a>
          <a href="#" class="leaf"><svg><use href="#leaf"/></svg>构件3</a>
          <a href="#" class="leaf"><svg><use href="#leaf"/></svg>构件4</a>
        </div>
        <div class="low flex-shrink-0">
          <table class="w-100">
            <colgroup><col><col><col></colgroup>
            <thead><tr><th></th><th>属性名称</th><th>属性值</th></tr></thead>
            <tbody>
              <tr><th>1</th><td>构件名称</td><td>板加强筋</td></tr>
              <tr><th>2</th><td>构件类型</td><td>其它</td></tr>
              <tr><th>3</th><td>构件数量</td><td>1</td></tr>
            </tbody>
          </table>
        </div>
      </div>
      <div class="split flex-shrink-0"></div>
      <div class="d-flex flex-column flex-grow-1 overflow-hidden">
        <div class="bar d-flex align-items-center flex-shrink-0 ps-1 border-end-0">
          <div class="movers d-flex">
            <button aria-label="上移"><svg class="ic"><use href="#up"/></svg></button>
            <button aria-label="下移"><svg class="ic flip-y"><use href="#up"/></svg></button>
          </div>
          <button class="tool"><svg class="ic" viewBox="0 0 16 16"><g fill="#4a8ad6" font-size="12"><text x="0" y="12">a</text><text x="9" y="12">e</text></g><path d="M6 1.500h3M7.500 2v12M6 14.500h3" stroke="#8a9099"/></svg>参数输入</button>
          <button class="tool"><svg class="ic"><use href="#ins"/></svg>插入</button>
          <button class="tool"><svg class="ic"><use href="#del"/></svg>删除</button>
          <button class="tool"><svg class="ic"><use href="#ruler"/></svg>缩尺配筋</button>
          <button class="tool"><svg class="ic"><use href="#info"/></svg>钢筋信息</button>
          <button class="tool"><svg class="ic"><use href="#lib"/></svg>钢筋图库</button>
          <button class="tool"><svg class="ic"><use href="#oth"/></svg>其他<i class="caret"></i></button>
        </div>
        <div class="sheet flex-grow-1">
          <table class="bars">
            <colgroup><col><col><col><col><col><col><col><col><col><col><col><col><col><col><col></colgroup>
            <thead><tr><th></th><th class="on">筋号</th><th>直径(mm)</th><th>级别</th><th>图号</th><th>图形</th><th>计算公式</th><th>公式描述</th><th>长度</th><th>根数</th><th>搭接</th><th>损耗(%)</th><th>单重(kg)</th><th>总重(kg)</th><th>钢筋归类</th></tr></thead>
            <tbody>
              <tr class="r1"><th>1</th><td class="cur">1</td><td>20</td>
                <td><svg width="12" height="10" viewBox="0 0 12 10" role="img" aria-label="HRB400"><path d="M2.500 2.500h7v4h-7zM6 0v9M2 9.500h8" fill="none" stroke="#111"/></svg></td>
                <td>63</td>
                <td class="p-0"><svg class="shape" width="215" height="44" viewBox="0 0 215 44"><text x="17" y="29" fill="#f00000">100</text><path d="M47 13v19h163V13" fill="none" stroke="#000" stroke-width="2"/><text x="116" y="25">1500</text></svg></td>
                <td>1500+2*100</td><td></td><td>1700</td><td>5</td><td>0</td><td>0</td><td>4.199</td><td>20.995</td><td class="han">直筋</td></tr>
              <tr class="r2"><th>2</th><td></td><td></td><td></td><td></td><td></td><td></td><td></td><td></td><td></td><td></td><td></td><td></td><td></td><td></td></tr>
            </tbody>
          </table>
        </div>
      </div>
    </div>
  </section>
</main>

<svg class="marks position-absolute" width="1723" height="848" viewBox="0 0 1723 848" fill="#f51cf5" aria-hidden="true">
  <path d="M314 37L296 42L300 46L219 120L305 52L308 56z"/>
  <path d="M629 87L616 101L620 103L590 206L628 105L632 106z"/>
  <path d="M93 537L109 546L106 549L182 668L99 553L97 557z"/>
  <path d="M437 424L454 429L451 432L565 543L446 437L443 440z"/>
  <path d="M814 424L822 440L818 440L813 541L810 440L806 440z"/>
</svg>
<script src="https://cdn.jsdelivr.net/npm/bootstrap@5.3.0/dist/js/bootstrap.bundle.min.js"></script>
</body>
</html>
